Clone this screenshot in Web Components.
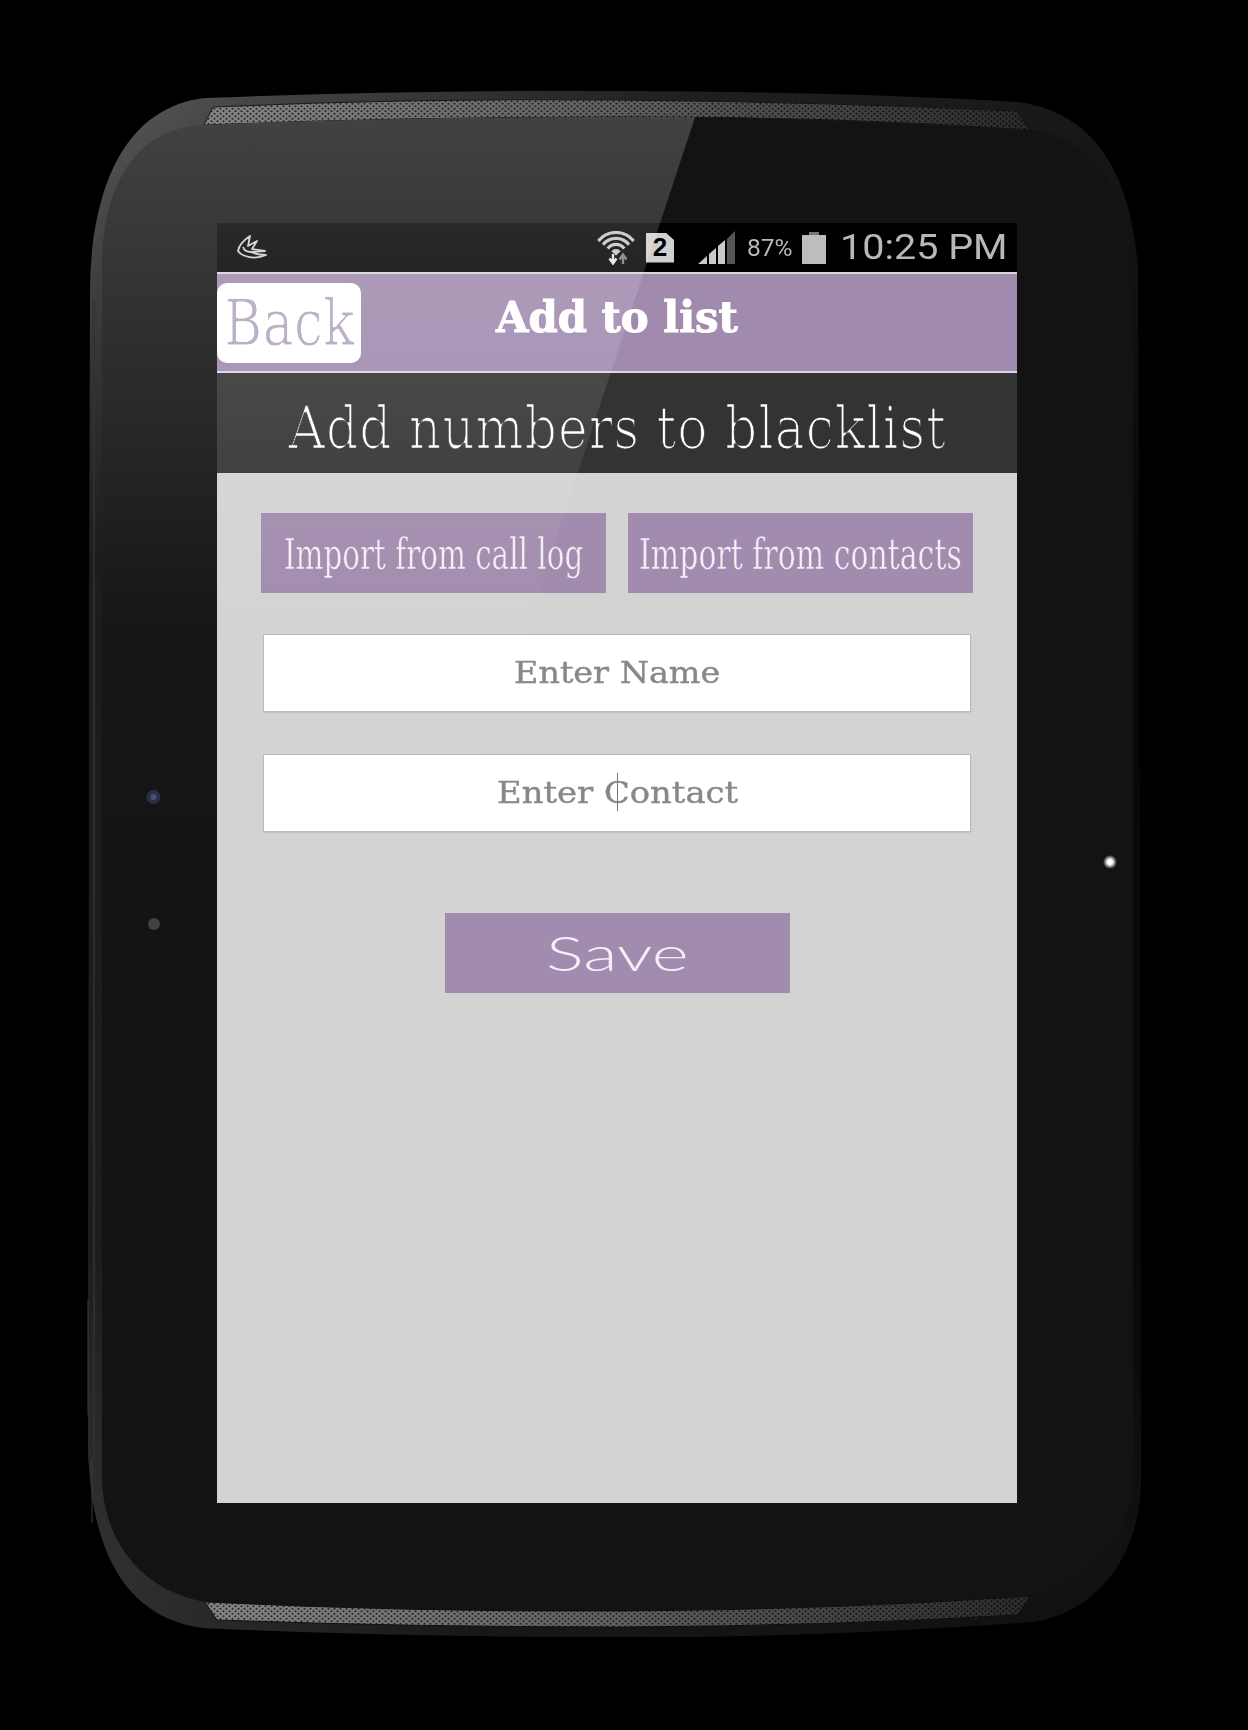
<!DOCTYPE html>
<html>
<head>
<meta charset="utf-8">
<title>Add to list</title>
<style>
  html, body { margin: 0; background: #000; }
  body { width: 1248px; height: 1730px; overflow: hidden; font-family: "DejaVu Serif", serif; }
</style>
</head>
<body>
<tablet-frame>
  <app-screen>
    <status-bar></status-bar>
    <title-bar heading="Add to list" back="Back"></title-bar>
    <sub-header>Add numbers to blacklist</sub-header>
    <blacklist-form></blacklist-form>
  </app-screen>
</tablet-frame>

<script>
// Horizontal-only erode, thins the stems of the serif so it reads as a light slab
const THIN_FILTER = `
  <svg width="0" height="0" style="position:absolute">
    <filter id="thin" x="-5%" y="-5%" width="110%" height="110%">
      <feMorphology operator="erode" radius="1 0"/>
    </filter>
  </svg>
`;

// Squeezes or stretches one line of text to the width given in the "fit" attribute
class FitText extends HTMLElement {
  constructor() {
    super();
    this.attachShadow({ mode: 'open' });
    this.shadowRoot.innerHTML = `
      <style>
        :host { display: block; flex: none; line-height: 1; white-space: nowrap; }
        span { display: inline-block; transform-origin: 0 50%; }
      </style>
      <span><slot></slot></span>
    `;
  }

  connectedCallback() {
    const target = Number(this.getAttribute('fit'));
    const span = this.shadowRoot.querySelector('span');
    this.style.width = target + 'px';
    span.style.transform = `scaleX(${target / span.offsetWidth})`;
  }
}

class AppButton extends HTMLElement {
  constructor() {
    super();
    this.attachShadow({ mode: 'open' });
    this.shadowRoot.innerHTML = `
      <style>
        :host {
          display: flex;
          align-items: center;
          justify-content: center;
          width: 345px;
          height: 80px;
          flex: none;
          background: #a18bae;
          color: #f4eff6;
          font: 42px "DejaVu Serif", serif;
          -webkit-text-stroke: .5px #a18bae;
        }
        ::slotted(*) { margin-top: 4px; }
        :host([big]) {
          font-family: "Lato", sans-serif;
          font-weight: 300;
          font-size: 47px;
          -webkit-text-stroke: 0;
        }
        :host([big]) ::slotted(*) { margin-top: 0; }
      </style>
      <slot></slot>
    `;
  }
}

class TextField extends HTMLElement {
  constructor() {
    super();
    this.attachShadow({ mode: 'open' });
    this.shadowRoot.innerHTML = `
      <style>
        :host {
          display: flex;
          align-items: center;
          justify-content: center;
          position: relative;
          height: 76px;
          margin: 0 3px;
          background: #fff;
          box-shadow: 0 0 0 1px #b9b9b9, 0 1px 2px #9a9a9a;
          color: #888;
          font: 30px "DejaVu Serif", serif;
          -webkit-text-stroke: .4px #888;
        }
        i {
          position: absolute;
          left: 353px;
          top: 18px;
          width: 1px;
          height: 38px;
          background: #777;
          display: none;
        }
        :host([caret]) i { display: block; }
      </style>
      <slot></slot><i></i>
    `;
  }
}

class StatusBar extends HTMLElement {
  constructor() {
    super();
    this.attachShadow({ mode: 'open' });
    this.shadowRoot.innerHTML = `
      <style>
        :host {
          display: flex;
          align-items: center;
          height: 49px;
          padding: 0 10px 0 20px;
          background: #000;
          border-bottom: 2px solid #d6d6d6;
          color: #b8b8b8;
          font-family: Roboto, sans-serif;
        }
        svg { display: block; flex: none; }
        .spacer { flex: 1; }
        .sim {
          display: flex;
          align-items: center;
          justify-content: center;
          width: 28px;
          height: 30px;
          margin-left: 9px;
          background: #d0d0d0;
          clip-path: polygon(0 0, 70% 0, 100% 25%, 100% 100%, 0 100%);
          color: #000;
          font: bold 26px "Liberation Sans", sans-serif;
          flex: none;
        }
        .pct { margin-left: 12px; font-size: 24px; }
        .clock { margin-left: 14px; font-size: 35px; }
      </style>
      <svg width="30" height="25" viewBox="0 0 30 25" fill="none" stroke="#cfcfcf" stroke-width="1.800" stroke-linejoin="round">
        <path d="M13 1C7 5 2 10 1 16C5 22 18 25 29 20C23 20 18 19 14 17L28 16L15 14L20 6L11 11Z"/>
        <path d="M6 12C7 15 10 17 14 17"/>
      </svg>
      <span class="spacer"></span>
      <svg width="40" height="34" viewBox="0 0 40 34" fill="none" stroke="#c4c4c4" stroke-width="3.2">
        <path d="M1.3 10.1A22.500 22.500 0 0 1 36.700 10.100"/>
        <path d="M6 13.800A16.500 16.500 0 0 1 32 13.800"/>
        <path d="M10.700 17.500A10.500 10.500 0 0 1 27.300 17.500"/>
        <path d="M19 24.500L14.300 20.300A6 6 0 0 1 23.700 20.300z" fill="#c4c4c4" stroke="none"/>
        <path d="M16 23v8M12.500 27.500L16 32.500l3.500-5" stroke="#e4e4e4" stroke-width="2.4"/>
        <path d="M26 33v-8M22.500 28.500L26 23.500l3.500 5" stroke="#7c7c7c" stroke-width="2.4"/>
      </svg>
      <div class="sim">2</div>
      <svg width="37" height="33" viewBox="0 0 37 33" style="margin-left:24px">
        <polygon points="0,33 9,25 9,33" fill="#c9c9c9"/>
        <polygon points="11,23 18,17 18,33 11,33" fill="#c9c9c9"/>
        <polygon points="20,15 27,9 27,33 20,33" fill="#c9c9c9"/>
        <polygon points="29,8 37,0 37,33 29,33" fill="#555"/>
      </svg>
      <fit-text class="pct" fit="46">87%</fit-text>
      <svg width="24" height="32" viewBox="0 0 24 32" style="margin-left:9px">
        <rect x="7" y="0" width="10" height="4" fill="#777"/>
        <rect x="0" y="3" width="24" height="29" fill="#bdbdbd"/>
      </svg>
      <fit-text class="clock" fit="167">10:25 PM</fit-text>
    `;
  }
}

class TitleBar extends HTMLElement {
  constructor() {
    super();
    this.attachShadow({ mode: 'open' });
    this.shadowRoot.innerHTML = `
      <style>
        :host {
          display: grid;
          grid-template-columns: 1fr auto 1fr;
          align-items: center;
          height: 97px;
          background: #a08aae;
          border-bottom: 2px solid #dcd6e0;
          color: #fff;
        }
        .back {
          display: flex;
          align-items: center;
          justify-content: center;
          width: 144px;
          height: 80px;
          border-radius: 10px;
          background: #fff;
          color: #b3a5c0;
          font: 64px "DejaVu Serif", serif;
          -webkit-text-stroke: .8px #fff;
        }
        .back fit-text { filter: url(#thin); }
        h1 {
          margin: 0 0 9px;
          font: bold 42px "DejaVu Serif", serif;
          -webkit-text-stroke: 1px #fff;
        }
      </style>
      ${THIN_FILTER}
      <div class="back"><fit-text fit="131">${this.getAttribute('back')}</fit-text></div>
      <h1><fit-text fit="242">${this.getAttribute('heading')}</fit-text></h1>
      <span></span>
    `;
  }
}

class SubHeader extends HTMLElement {
  constructor() {
    super();
    this.attachShadow({ mode: 'open' });
    this.shadowRoot.innerHTML = `
      <style>
        :host {
          display: flex;
          align-items: center;
          justify-content: center;
          height: 100px;
          background: #333;
          color: #fff;
          font: 58px "DejaVu Serif", serif;
          -webkit-text-stroke: .7px #333;
        }
        fit-text { margin-top: 9px; filter: url(#thin); }
      </style>
      ${THIN_FILTER}
      <fit-text fit="658"><slot></slot></fit-text>
    `;
  }
}

class BlacklistForm extends HTMLElement {
  constructor() {
    super();
    this.attachShadow({ mode: 'open' });
    this.shadowRoot.innerHTML = `
      <style>
        :host {
          display: flex;
          flex-direction: column;
          height: 1030px;
          padding: 40px 44px 0;
          box-sizing: border-box;
          background: #d3d3d3;
        }
        .imports { display: flex; gap: 22px; margin-bottom: 42px; }
        text-field + text-field { margin-top: 44px; }
        .save { margin: 82px auto 0; }
      </style>
      <div class="imports">
        <app-button><fit-text fit="299">Import from call log</fit-text></app-button>
        <app-button><fit-text fit="323">Import from contacts</fit-text></app-button>
      </div>
      <text-field><fit-text fit="206">Enter Name</fit-text></text-field>
      <text-field caret><fit-text fit="241">Enter Contact</fit-text></text-field>
      <app-button class="save" big><fit-text fit="143">Save</fit-text></app-button>
    `;
  }
}

class AppScreen extends HTMLElement {
  constructor() {
    super();
    this.attachShadow({ mode: 'open' });
    this.shadowRoot.innerHTML = `
      <style>
        :host { display: flex; flex-direction: column; width: 800px; height: 1280px; overflow: hidden; }
      </style>
      <slot></slot>
    `;
  }
}

// Device body is drawn as one svg behind the screen, the glass reflection as one in front
class TabletFrame extends HTMLElement {
  constructor() {
    super();
    this.attachShadow({ mode: 'open' });
    const outer = 'M88 1450L90 290C91 200 118 108 205 98Q410 90 620 91Q850 92 1017 102C1090 110 1132 170 1138 270L1141 1480C1140 1560 1095 1612 1033 1622Q820 1638 620 1637Q400 1637 203 1628C130 1618 92 1560 88 1450Z';
    const inner = 'M102 270C102 210 120 130 204 125Q400 117 620 117Q830 116 1030 130C1090 136 1130 190 1133 270L1133 1480C1130 1540 1095 1578 1030 1596Q830 1610 620 1611Q410 1612 205 1602C140 1590 104 1540 102 1480Z';
    const grillTop = 'M204 125L213 107Q410 98 620 100Q830 102 1017 111L1030 130Q830 116 620 117Q400 117 204 125Z';
    const grillBottom = 'M205 1602Q410 1612 620 1611Q830 1610 1030 1596L1018 1615Q830 1626 620 1627Q410 1627 217 1620Z';
    this.shadowRoot.innerHTML = `
      <style>
        :host { display: block; position: relative; width: 1248px; height: 1730px; padding: 223px 0 0 217px; box-sizing: border-box; }
        svg { position: absolute; left: 0; top: 0; }
        .gloss { pointer-events: none; }
        ::slotted(*) { position: relative; }
      </style>
      <svg width="1248" height="1730" viewBox="0 0 1248 1730">
        <defs>
          <linearGradient id="shell" x1="0" y1="0" x2="1" y2="0.2">
            <stop offset="0" stop-color="#5a5a5a"/>
            <stop offset=".2" stop-color="#404040"/>
            <stop offset=".55" stop-color="#1f1f1f"/>
            <stop offset="1" stop-color="#171717"/>
          </linearGradient>
          <linearGradient id="shellBottom" x1="0" y1="0" x2="0" y2="1">
            <stop offset="0" stop-color="#000" stop-opacity="0"/>
            <stop offset=".3" stop-color="#000" stop-opacity=".65"/>
            <stop offset=".75" stop-color="#000" stop-opacity=".6"/>
            <stop offset=".95" stop-color="#000" stop-opacity=".25"/>
          </linearGradient>
          <pattern id="mesh" width="6" height="5" patternUnits="userSpaceOnUse">
            <rect width="6" height="5" fill="#8c8c8c"/>
            <circle cx="1.500" cy="1.250" r="1.100" fill="#2a2a2a"/>
            <circle cx="4.500" cy="3.750" r="1.100" fill="#2a2a2a"/>
          </pattern>
          <linearGradient id="meshFade" x1="200" y1="0" x2="1030" y2="0" gradientUnits="userSpaceOnUse">
            <stop offset="0" stop-color="#000" stop-opacity=".05"/>
            <stop offset=".5" stop-color="#000" stop-opacity=".3"/>
            <stop offset="1" stop-color="#000" stop-opacity=".7"/>
          </linearGradient>
          <radialGradient id="led">
            <stop offset="0" stop-color="#fff"/>
            <stop offset=".35" stop-color="#fff"/>
            <stop offset="1" stop-color="#fff" stop-opacity="0"/>
          </radialGradient>
        </defs>
        <path d="${outer}" fill="url(#shell)"/>
        <path d="${outer}" fill="url(#shellBottom)"/>
        <path d="${inner}" fill="#131313"/>
        <path d="${grillTop}" fill="url(#mesh)" stroke="#1a1a1a"/>
        <path d="${grillTop}" fill="url(#meshFade)"/>
        <path d="${grillBottom}" fill="url(#mesh)" stroke="#111"/>
        <path d="${grillBottom}" fill="url(#meshFade)"/>
        <path d="M94 300V1460" stroke="#333" stroke-width="1.500"/>
        <path d="M88 1300V1415M92 1460V1523" stroke="#3d3d3d" stroke-width="1"/>
        <circle cx="153.500" cy="797" r="7" fill="#2b2e44"/>
        <circle cx="153.500" cy="797" r="3" fill="#4a4f70"/>
        <circle cx="154" cy="924" r="6" fill="#414141"/>
        <circle cx="1110" cy="862" r="7" fill="url(#led)"/>
      </svg>
      <slot></slot>
      <svg class="gloss" width="1248" height="1730" viewBox="0 0 1248 1730">
        <defs>
          <linearGradient id="sheen" x1="0" y1="60" x2="0" y2="1000" gradientUnits="userSpaceOnUse">
            <stop offset="0" stop-color="#fff" stop-opacity=".22"/>
            <stop offset=".6" stop-color="#fff" stop-opacity=".015"/>
            <stop offset="1" stop-color="#fff" stop-opacity="0"/>
          </linearGradient>
          <clipPath id="body"><path d="${inner}"/></clipPath>
        </defs>
        <polygon points="90,90 704,90 374,1090 90,1090" fill="url(#sheen)" clip-path="url(#body)"/>
      </svg>
    `;
  }
}

customElements.define('fit-text', FitText);
customElements.define('app-button', AppButton);
customElements.define('text-field', TextField);
customElements.define('status-bar', StatusBar);
customElements.define('title-bar', TitleBar);
customElements.define('sub-header', SubHeader);
customElements.define('blacklist-form', BlacklistForm);
customElements.define('app-screen', AppScreen);
customElements.define('tablet-frame', TabletFrame);
</script>
</body>
</html>
